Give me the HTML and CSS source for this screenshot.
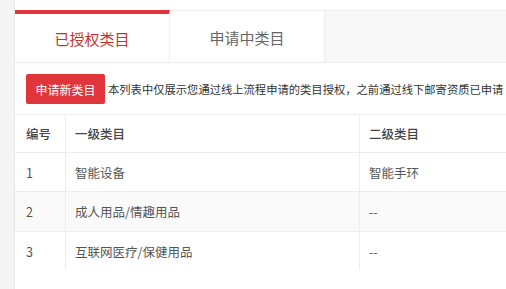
FILE: index.html
```html
<!DOCTYPE html>
<html lang="zh-CN">
<head>
  <meta charset="UTF-8">
  <title>类目授权</title>
  <meta name="viewport" content="width=device-width, initial-scale=1">
  <link rel="stylesheet" href="styles.css">
</head>
<body>
  <div class="page">
    <div class="tabs">
      <div class="tab active">已授权类目</div>
      <div class="tab">申请中类目</div>
    </div>
    <div class="panel">
      <div class="toolbar">
        <button class="apply-btn">申请新类目</button>
        <span class="notice">本列表中仅展示您通过线上流程申请的类目授权，之前通过线下邮寄资质已申请</span>
      </div>
      <table class="cat-table">
        <thead>
          <tr>
            <th class="col-no">编号</th>
            <th class="col-first">一级类目</th>
            <th>二级类目</th>
          </tr>
        </thead>
        <tbody>
          <tr><td>1</td><td>智能设备</td><td>智能手环</td></tr>
          <tr class="alt"><td>2</td><td>成人用品/情趣用品</td><td>--</td></tr>
          <tr><td>3</td><td>互联网医疗/保健用品</td><td>--</td></tr>
        </tbody>
      </table>
    </div>
  </div>
</body>
</html>
```

FILE: styles.css
```css
body {
  margin: 0;
  background: #f4f4f4;
  font-family: "Noto Sans CJK SC", "Noto Sans", sans-serif;
  color: #333;
  overflow: hidden;
}
.page {
  margin-left: 14px;
  width: 492px;
  height: 289px;
  background: #fff;
  border-left: 1px solid #e6e6e6;
  padding-top: 10px;
  box-sizing: border-box;
  overflow: hidden;
}
.tabs {
  display: flex;
  height: 53px;
  background: #f8f8f8;
  border-top: 1px solid #ececec;
  border-bottom: 1px solid #ececec;
  box-sizing: border-box;
}
.tab {
  width: 155px;
  display: flex;
  align-items: center;
  justify-content: center;
  background: #fff;
  font-size: 15px;
  color: #666;
  border-right: 1px solid #ececec;
  box-sizing: border-box;
  padding-top: 2px;
}
.tab.active {
  color: #c9302c;
  border-top: 4px solid #e0353b;
  margin-top: -1px;
  padding-top: 0;
  border-right: 1px solid #f0f0f0;
}
.panel {
  padding: 11px 0 0 0;
}
.toolbar {
  display: flex;
  align-items: center;
  padding-left: 11px;
  white-space: nowrap;
}
.apply-btn {
  flex-shrink: 0;
  width: 79px;
  height: 30px;
  border: none;
  border-radius: 2px;
  background: #e0353b;
  color: #fff;
  font-family: inherit;
  font-size: 12px;
  padding: 0;
  margin-right: 3px;
}
.notice {
  font-size: 11.3px;
  color: #333;
}
.cat-table {
  margin-top: 10px;
  width: 100%;
  border-collapse: collapse;
  font-size: 12.5px;
}
.cat-table th,
.cat-table td {
  text-align: left;
  border-top: 1px solid #eeeeee;
  border-left: 1px solid #eeeeee;
  padding: 0 0 0 9px;
}
.cat-table th:first-child,
.cat-table td:first-child {
  border-left: none;
  padding-left: 11px;
}
.cat-table th {
  height: 37px;
  font-weight: 500;
  color: #444;
}
.cat-table td {
  height: 38px;
  color: #555;
}
.cat-table tr.alt td {
  background: #fafafa;
  height: 39px;
}
.col-no {
  width: 39px;
}
.col-first {
  width: 284px;
}
```
